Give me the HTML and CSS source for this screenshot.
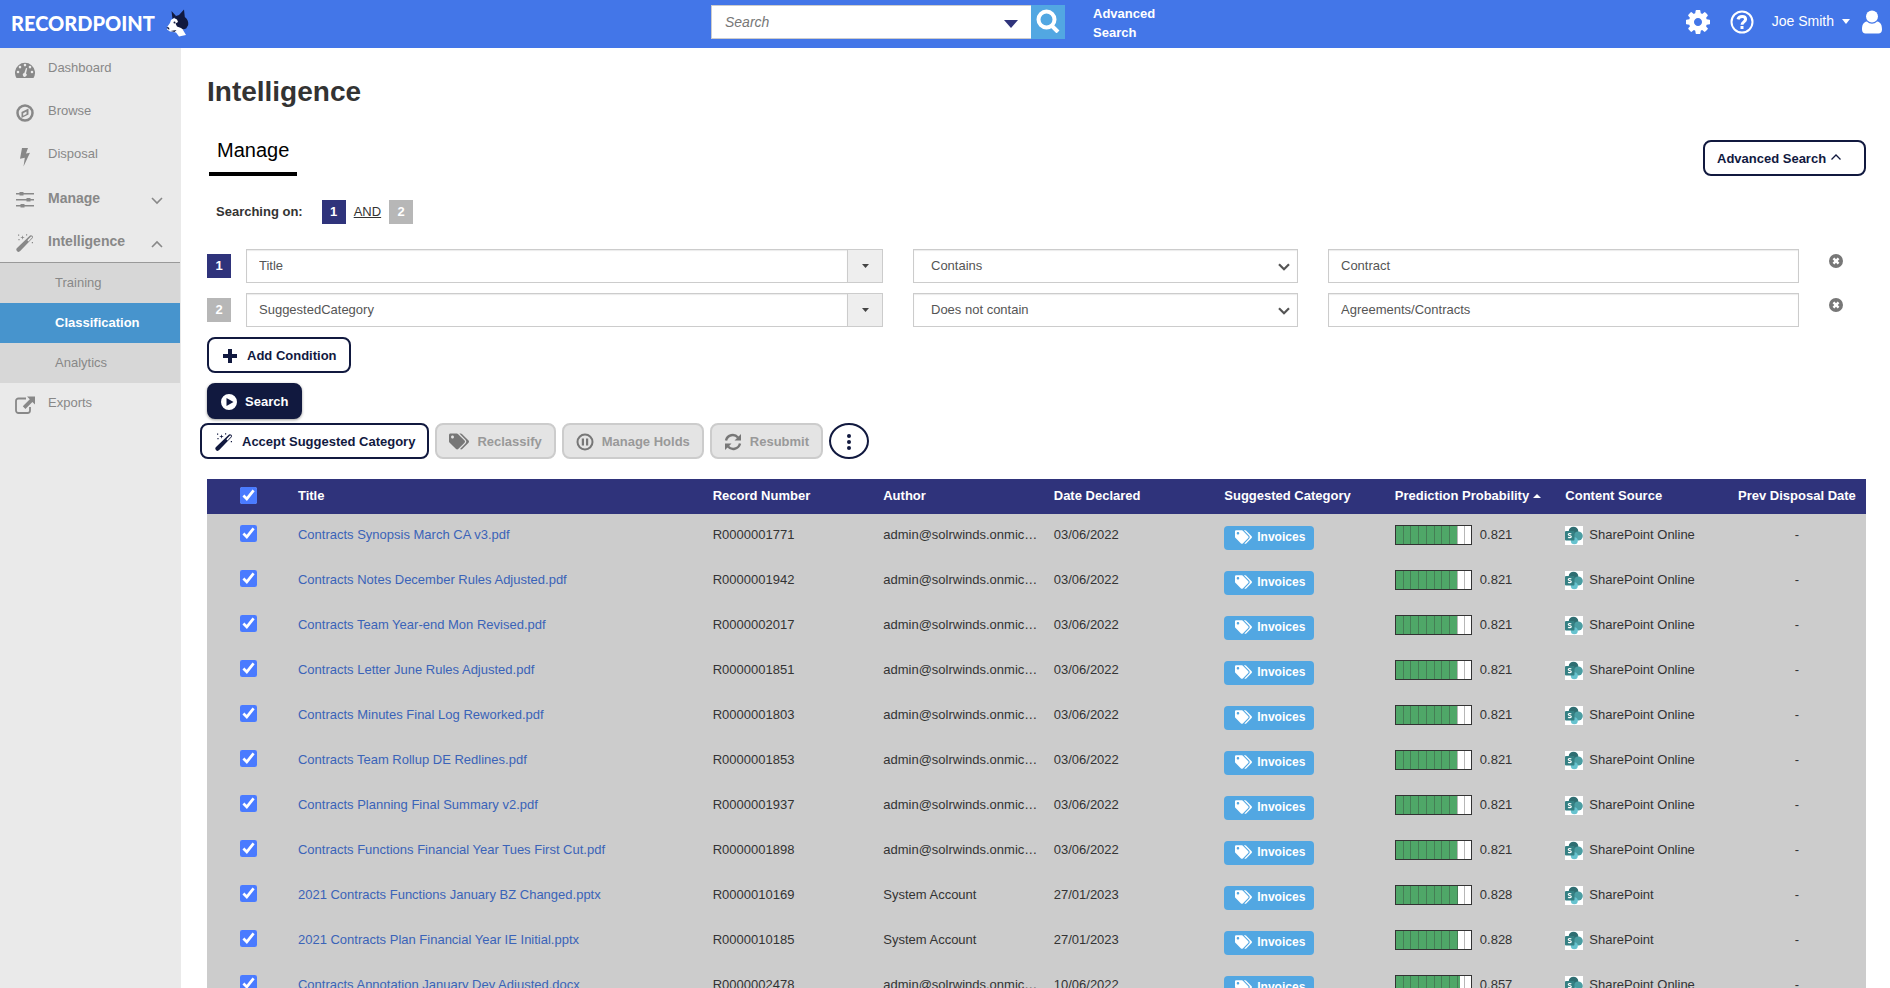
FILE: index.html
```html
<!DOCTYPE html>
<html lang="en">
<head>
    <meta charset="UTF-8">
    <meta name="viewport" content="width=device-width, initial-scale=1.0">
    <title>RecordPoint - Intelligence</title>
    <link rel="stylesheet" href="styles.css">
</head>
<body>
    <svg class="sprite" aria-hidden="true">
        <symbol id="i-tags" viewBox="0 0 640 512"><path d="M497.941 225.941L286.059 14.059A48 48 0 0 0 252.118 0H48C21.490 0 0 21.490 0 48v204.118a48 48 0 0 0 14.059 33.941l211.882 211.882c18.744 18.745 49.136 18.746 67.882 0l204.118-204.118c18.745-18.745 18.745-49.137 0-67.882zM112 160c-26.510 0-48-21.490-48-48s21.490-48 48-48 48 21.490 48 48-21.490 48-48 48zm513.941 133.823L421.823 497.941c-18.745 18.745-49.137 18.745-67.882 0l-.36-.36L527.640 323.522c16.999-16.999 26.362-39.600 26.362-63.640s-9.362-46.641-26.362-63.640L331.397 0h48.721a48 48 0 0 1 33.941 14.059l211.882 211.882c18.745 18.745 18.745 49.137 0 67.882z"/></symbol>
        <symbol id="i-wand" viewBox="0 0 18 18">
            <path fill-rule="evenodd" d="M14 1.400a2 2 0 0 1 2.700 2.700L4.200 17.100a2 2 0 0 1-3.200-3zM15 2.600l-3.600 3.700 1.100 1.100 3.600-3.800a.8.8 0 0 0-1.100-1z"/>
            <path d="M6.500 1.200l.5 1.800 1.800.5-1.800.5-.5 1.800L6 4l-1.800-.5L6 3zM2 .5h1.200v1.200H2zM10 .3h1.200v1.200H10zM15.800 8H17v1.200h-1.200zM2.400 5h1.200v1.200H2.400z"/>
        </symbol>
        <symbol id="i-sharepoint" viewBox="0 0 18 19">
            <path fill="#fff" d="M0 0h18v19H0z"/>
            <circle cx="8.500" cy="5.500" r="4.800" fill="#2f6e72"/>
            <circle cx="13.200" cy="10" r="4.600" fill="#4a9da2"/>
            <circle cx="9.300" cy="14.700" r="3.500" fill="#66c2ce"/>
            <rect y="5" width="9.500" height="9.500" rx="1" fill="#358083"/>
            <path fill="none" stroke="#fff" stroke-width="1.200" d="M6.300 7.900c-.8-.6-3-.6-3 .6s3 .8 3 2.100-2.200 1.300-3.200.6"/>
        </symbol>
        <symbol id="i-ticks" viewBox="0 0 75 18"><path shape-rendering="crispEdges" d="M7 0h1v18H7zM14 0h1v18h-1zM22 0h1v18h-1zM30 0h1v18h-1zM38 0h1v18h-1zM45 0h1v18h-1zM53 0h1v18h-1zM61 0h1v18h-1zM68 0h1v18h-1z"/></symbol>
        <symbol id="i-down" viewBox="0 0 12 8"><path fill="none" stroke="currentColor" stroke-width="2.200" d="M1 1.200l5 5 5-5"/></symbol>
        <symbol id="i-remove" viewBox="0 0 14 14"><path fill-rule="evenodd" d="M7 0a7 7 0 1 1 0 14A7 7 0 0 1 7 0zM5.300 3.600L3.600 5.300 5.300 7 3.600 8.700l1.700 1.700L7 8.700l1.700 1.700 1.700-1.700L8.700 7l1.700-1.700-1.700-1.700L7 5.300z"/></symbol>
    </svg>

    <header class="topbar">
        <a href="#" class="logo">RECORDPOINT
            <svg width="23" height="28" viewBox="0 0 23 28" aria-hidden="true">
                <path fill="#fff" d="M5 11l3-2 6 0 6 4-2 6-1 2 3 5-7 1.500-3-4-6-1-3-2 .5-3L4 14z"/>
                <path fill="#11193f" d="M5.500 2l4.500 5-3.500 3zM13 6l5-5.500.8 7.500c3 2 3.800 5 3.400 8l-2 3.500-3.200 1-2-1.500-4-1.500-1.500-3 2.500-1.500-1-2.500-3-1.500 2-2zM.5 18l2.500.5.5 2-1.500-.3zM4.500 22l6-1-2 2z"/>
                <circle cx="8.500" cy="13.500" r="1" fill="#11193f"/>
            </svg>
        </a>
        <form class="global-search">
            <input type="text" placeholder="Search" aria-label="Search">
            <svg class="search-caret" width="14" height="8" viewBox="0 0 14 8" aria-hidden="true"><path d="M0 0h14L7 8z"/></svg>
            <button type="button" aria-label="Search">
                <svg width="24" height="24" viewBox="0 0 24 24" aria-hidden="true"><path fill="none" stroke="#fff" stroke-width="4" d="M16 17l6 6"/><circle cx="10.500" cy="10.500" r="8" fill="none" stroke="#fff" stroke-width="4"/></svg>
            </button>
        </form>
        <div class="topbar-right">
            <a href="#" class="adv-link">Advanced<br>Search</a>
            <a href="#" class="icon-link" aria-label="Settings">
                <svg width="28" height="28" viewBox="0 0 1792 1792"><path d="M1152 896q0-106-75-181t-181-75-181 75-75 181 75 181 181 75 181-75 75-181zm512-109v222q0 12-8 23t-20 13l-185 28q-19 54-39 91 35 50 107 138 10 12 10 25t-9 23q-27 37-99 108t-94 71q-12 0-26-9l-138-108q-44 23-91 38-16 136-29 186-7 28-36 28h-222q-14 0-24.500-8.500t-11.500-21.500l-28-184q-49-16-90-37l-141 107q-10 9-25 9-14 0-25-11-126-114-165-168-7-10-7-23 0-12 8-23 15-21 51-66.500t54-70.500q-27-50-41-99l-183-27q-13-2-21-12.500t-8-23.500v-222q0-12 8-23t19-13l186-28q14-46 39-92-40-57-107-138-10-12-10-24 0-10 9-23 26-36 98.500-107.500t94.500-71.500q13 0 26 10l138 107q44-23 91-38 16-136 29-186 7-28 36-28h222q14 0 24.500 8.500t11.500 21.500l28 184q49 16 90 37l142-107q9-9 24-9 13 0 25 10 129 119 165 170 7 8 7 22 0 12-8 23-15 21-51 66.500t-54 70.500q26 50 41 98l183 28q13 2 21 12.500t8 23.500z"/></svg>
            </a>
            <a href="#" class="icon-link" aria-label="Help">
                <svg width="24" height="24" viewBox="0 0 24 24"><circle cx="12" cy="12" r="10.500" fill="none" stroke="#fff" stroke-width="2"/><path fill="none" stroke="#fff" stroke-width="3" d="M8 9.300c1-3.800 7.600-3.600 7.600 0 0 2.600-3.600 2.500-3.600 5.500"/><path d="M10.500 16h3v3h-3z"/></svg>
            </a>
            <a href="#" class="user-menu">Joe Smith
                <svg width="8" height="5" viewBox="0 0 8 5" aria-hidden="true"><path d="M0 0h8L4 5z"/></svg>
            </a>
            <svg class="avatar" width="20" height="24" viewBox="0 0 20 24" aria-hidden="true"><circle cx="10" cy="6.500" r="6"/><path d="M5 11.500c3 3 7 3 10 0 4 .5 5 4 5 8 0 2.500-1.500 4-3.500 4h-13C1.500 23.500 0 22 0 19.500c0-4 1-7.500 5-8z"/></svg>
        </div>
    </header>

    <div class="layout">
        <nav class="sidebar">
            <a href="#" class="nav-item">
                <svg width="20" height="18" viewBox="0 0 20 18"><path fill-rule="evenodd" d="M1.500 17A10 10 0 1 1 18.500 17zM10 2.800a1.300 1.300 0 1 0 0 2.600 1.300 1.300 0 0 0 0-2.600zM5 4.800a1.300 1.300 0 1 0 0 2.600 1.300 1.300 0 0 0 0-2.600zm10 0a1.300 1.300 0 1 0 0 2.600 1.300 1.300 0 0 0 0-2.600zM3 9.700a1.300 1.300 0 1 0 0 2.600 1.300 1.300 0 0 0 0-2.600zm14 0a1.300 1.300 0 1 0 0 2.600 1.300 1.300 0 0 0 0-2.600zM11 7l-1.700 5a1.900 1.900 0 1 0 1.700.4L12.200 7.300z"/></svg>
                Dashboard</a>
            <a href="#" class="nav-item">
                <svg width="20" height="18" viewBox="0 0 20 18"><circle cx="10" cy="9" r="7.500" fill="none" stroke="currentColor" stroke-width="2.500"/><path fill-rule="evenodd" d="M13.500 4.500v6l-7 3.500V8zM11.500 7.500L8.200 9.200v2.600l3.300-1.700z"/></svg>
                Browse</a>
            <a href="#" class="nav-item">
                <svg width="20" height="20" viewBox="0 0 20 20"><path d="M7 1h6l-2 5.500 4-.7L8.500 19.500l1.300-8.700-4.800.9z"/></svg>
                Disposal</a>
            <a href="#" class="nav-item group">
                <svg width="20" height="18" viewBox="0 0 20 18"><path d="M1 2h18v1.500H1zM1 8h18v1.500H1zM1 14h18v1.500H1zM4.500 1h4v3.500h-4zM11.500 7h4v3.500h-4zM5.500 13h4v3.500h-4z"/></svg>
                Manage
                <svg class="chevron" width="12" height="8" viewBox="0 0 12 8"><path fill="none" stroke="currentColor" stroke-width="1.600" d="M1 1l5 5 5-5"/></svg></a>
            <a href="#" class="nav-item group">
                <svg width="20" height="18"><use href="#i-wand"/></svg>
                Intelligence
                <svg class="chevron" width="12" height="8" viewBox="0 0 12 8"><path fill="none" stroke="currentColor" stroke-width="1.600" d="M1 7l5-5 5 5"/></svg></a>
            <div class="subnav">
                <a href="#">Training</a>
                <a href="#" class="active">Classification</a>
                <a href="#">Analytics</a>
            </div>
            <a href="#" class="nav-item">
                <svg width="20" height="18" viewBox="0 0 20 18"><path fill="none" stroke="currentColor" stroke-width="1.800" d="M11 2.500H3.500a2.500 2.500 0 0 0-2.500 2.500v9.500A2.500 2.500 0 0 0 3.500 17h9a2.500 2.500 0 0 0 2.500-2.500V11"/><path d="M12 .5h8v8l-2.600-2.600-7 7-2.600-2.600 7-7z"/></svg>
                Exports</a>
        </nav>

        <main class="content">
            <h1>Intelligence</h1>

            <div class="tabs">
                <a href="#" class="tab">Manage</a>
                <button type="button" class="btn btn-adv">Advanced Search
                    <svg width="10" height="6" viewBox="0 0 10 6" aria-hidden="true"><path fill="none" stroke="currentColor" stroke-width="1.300" d="M.5 5.500L5 1l4.500 4.500"/></svg>
                </button>
            </div>

            <div class="searching-on">
                <span class="label">Searching on:</span>
                <span class="num">1</span>
                <a href="#">AND</a>
                <span class="num muted">2</span>
            </div>

            <div class="condition">
                <span class="num">1</span>
                <div class="fields">
                    <div class="combo">
                        <input type="text" value="Title" aria-label="Field 1">
                        <button type="button" aria-label="Show fields"><svg width="7" height="4" viewBox="0 0 7 4"><path d="M0 0h7L3.500 4z"/></svg></button>
                    </div>
                    <div class="select">
                        <select aria-label="Operator 1"><option>Contains</option><option>Does not contain</option></select>
                        <svg width="12" height="8"><use href="#i-down"/></svg>
                    </div>
                    <input type="text" value="Contract" aria-label="Value 1">
                    <button type="button" class="remove" aria-label="Remove condition"><svg width="14" height="14"><use href="#i-remove"/></svg></button>
                </div>
            </div>
            <div class="condition">
                <span class="num muted">2</span>
                <div class="fields">
                    <div class="combo">
                        <input type="text" value="SuggestedCategory" aria-label="Field 2">
                        <button type="button" aria-label="Show fields"><svg width="7" height="4" viewBox="0 0 7 4"><path d="M0 0h7L3.500 4z"/></svg></button>
                    </div>
                    <div class="select">
                        <select aria-label="Operator 2"><option>Contains</option><option selected>Does not contain</option></select>
                        <svg width="12" height="8"><use href="#i-down"/></svg>
                    </div>
                    <input type="text" value="Agreements/Contracts" aria-label="Value 2">
                    <button type="button" class="remove" aria-label="Remove condition"><svg width="14" height="14"><use href="#i-remove"/></svg></button>
                </div>
            </div>

            <div class="search-buttons">
                <button type="button" class="btn">
                    <svg width="18" height="14" viewBox="0 0 18 14"><path d="M7 0h4v5h5v4h-5v5H7V9H2V5h5z"/></svg>
                    Add Condition</button>
                <button type="button" class="btn btn-primary">
                    <svg width="16" height="16" viewBox="0 0 16 16"><path fill-rule="evenodd" d="M8 0a8 8 0 1 1 0 16A8 8 0 0 1 8 0zM5.500 4v8l7-4z"/></svg>
                    Search</button>
            </div>

            <div class="actions">
                <button type="button" class="btn">
                    <svg width="20" height="18"><use href="#i-wand"/></svg>
                    Accept Suggested Category</button>
                <button type="button" class="btn" disabled>
                    <svg width="20" height="17"><use href="#i-tags"/></svg>
                    Reclassify</button>
                <button type="button" class="btn" disabled>
                    <svg width="18" height="18" viewBox="0 0 18 18"><circle cx="9" cy="9" r="7.500" fill="none" stroke="currentColor" stroke-width="2"/><path d="M5.800 5.500h2.200v7H5.800zM10 5.500h2.200v7H10z"/></svg>
                    Manage Holds</button>
                <button type="button" class="btn" disabled>
                    <svg width="18" height="18" viewBox="0 0 18 18"><path fill="none" stroke="currentColor" stroke-width="2.400" d="M2 7.500C3.500 1.500 10.500.5 14 4.500M16 10.500c-1.500 6-8.500 7-12 3"/><path d="M17 1v6.500h-6.500zM1 17v-6.500h6.500z"/></svg>
                    Resubmit</button>
                <button type="button" class="btn btn-more" aria-label="More actions">
                    <svg width="6" height="18" viewBox="0 0 6 18"><circle cx="3" cy="3" r="2"/><circle cx="3" cy="9" r="2"/><circle cx="3" cy="15" r="2"/></svg>
                </button>
            </div>

            <table class="records">
                <thead>
                    <tr>
                        <th class="check"><input type="checkbox" checked aria-label="Select all"></th>
                        <th class="title">Title</th>
                        <th>Record Number</th>
                        <th>Author</th>
                        <th>Date Declared</th>
                        <th>Suggested Category</th>
                        <th>Prediction Probability <svg width="8" height="4" viewBox="0 0 8 4"><path d="M0 4h8L4 0z"/></svg></th>
                        <th>Content Source</th>
                        <th class="disposal">Prev Disposal Date</th>
                    </tr>
                </thead>
                <tbody id="records"></tbody>
            </table>
        </main>
    </div>
    <script src="records.js"></script>
</body>
</html>
```
FILE: styles.css
```css
* {
    box-sizing: border-box;
}
body {
    margin: 0;
    height: 100vh;
    overflow: hidden;
    display: flex;
    flex-direction: column;
    font-family: "Liberation Sans", Arial, sans-serif;
    font-size: 13px;
    line-height: 20px;
    color: #333;
    background: #fff;
}
a {
    color: inherit;
    text-decoration: none;
}
svg {
    fill: currentColor;
    flex: none;
}
input, select, button {
    font: inherit;
}
button {
    cursor: pointer;
}
.sprite {
    display: none;
}

/* Top bar */
.topbar {
    flex: none;
    height: 48px;
    display: grid;
    grid-template-columns: 711fr 354px 825fr;
    background: #4376e8;
    color: #fff;
}
.logo {
    display: flex;
    align-items: center;
    gap: 11px;
    padding-left: 11px;
    padding-bottom: 2px;
    font-family: Lato, sans-serif;
    font-size: 20px;
    font-weight: 900;
}
.global-search {
    display: flex;
    height: 34px;
    margin-top: 5px;
    position: relative;
}
.global-search input {
    flex: 1;
    min-width: 0;
    padding: 0 13px;
    border: 1px solid #ccc;
    border-right: 0;
    font-size: 14px;
    font-style: italic;
}
.global-search input::placeholder {
    color: #777;
}
.search-caret {
    position: absolute;
    right: 47px;
    top: 15px;
    color: #2f337b;
}
.global-search button {
    width: 34px;
    padding: 4px;
    border: 0;
    background: #52a7e2;
}
.topbar-right {
    display: flex;
    align-items: flex-start;
    padding: 8px 8px 0 28px;
}
.adv-link {
    margin-top: -4px;
    margin-right: auto;
    font-weight: bold;
    line-height: 19px;
}
.icon-link {
    display: flex;
    align-items: center;
    height: 28px;
    margin-right: 18px;
}
.user-menu {
    display: flex;
    align-items: center;
    gap: 8px;
    height: 26px;
    margin-right: 12px;
    font-size: 14px;
}
.avatar {
    margin-top: 2px;
}

.layout {
    flex: 1;
    min-height: 0;
    display: flex;
}

/* Sidebar */
.sidebar {
    width: 181px;
    flex: none;
    padding-right: 1px;
    background: #eaeaea;
    color: #888;
}
.nav-item {
    display: flex;
    align-items: flex-start;
    gap: 13px;
    height: 43px;
    padding: 10px 17px 0 15px;
}
.nav-item svg {
    margin-top: 3px;
}
.nav-item.group {
    padding-top: 11px;
    font-size: 14px;
    font-weight: bold;
}
.nav-item .chevron {
    margin-top: 9px;
    margin-left: auto;
}
.subnav {
    margin-top: -1px;
    border-top: 1px solid #999;
    background: #d7d7d7;
}
.subnav a {
    display: block;
    padding: 10px 0 10px 55px;
}
.subnav .active {
    background: #4794cd;
    color: #fff;
    font-weight: bold;
}

/* Content */
.content {
    flex: 1;
    min-width: 0;
    padding: 27px 24px 0 26px;
    overflow: hidden;
}
h1 {
    margin: 0;
    font-size: 28px;
    line-height: 34px;
}
.tabs {
    display: flex;
    justify-content: space-between;
    align-items: flex-end;
    margin-top: 25px;
}
.tab {
    margin-left: 2px;
    padding: 0 8px 6px;
    border-bottom: 4px solid #000;
    color: #000;
    font-size: 20px;
    line-height: 32px;
}
.btn {
    display: inline-flex;
    align-items: center;
    gap: 8px;
    height: 36px;
    padding: 1px 12px 0;
    border: 2px solid #11193f;
    border-radius: 8px;
    background: #fff;
    color: #11193f;
    font-weight: bold;
}
.btn:disabled {
    border-color: #ccc;
    background: #e4e4e4;
    color: #999;
}
.btn:disabled svg {
    color: #777;
}
.btn-primary {
    background: #11193f;
    color: #fff;
    box-shadow: 0 1px 3px rgba(0, 0, 0, .4);
}
.btn-adv {
    gap: 5px;
    width: 163px;
    padding-top: 2px;
}
.btn-adv svg {
    margin-bottom: 4px;
}
.searching-on {
    display: flex;
    align-items: center;
    gap: 8px;
    margin: 24px 0 25px;
    padding-left: 9px;
    font-weight: bold;
}
.searching-on .label {
    margin-right: 11px;
}
.searching-on a {
    font-weight: normal;
    text-decoration: underline;
}
.num {
    flex: none;
    width: 24px;
    height: 24px;
    background: #2f337b;
    color: #fff;
    font-weight: bold;
    line-height: 24px;
    text-align: center;
}
.num.muted {
    background: #b7b7b7;
}
.condition {
    display: flex;
    align-items: center;
    gap: 15px;
    margin-bottom: 10px;
    color: #555;
}
.fields {
    flex: 1;
    display: grid;
    grid-template-columns: 637fr 385fr 471fr 37px;
    gap: 30px;
}
.fields input, .fields select {
    width: 100%;
    height: 34px;
    padding: 0 12px 1px;
    border: 1px solid #ccc;
    border-radius: 0;
    background: #fff;
    box-shadow: inset 0 1px 1px rgba(0, 0, 0, .08);
    color: #555;
}
.combo {
    display: flex;
}
.combo button {
    width: 35px;
    padding: 0;
    border: 1px solid #ccc;
    border-left: 0;
    background: #eee;
    color: #444;
    line-height: 0;
}
.combo input {
    flex: 1;
}
.select {
    position: relative;
}
.select select {
    appearance: none;
    padding-left: 17px;
}
.select svg {
    position: absolute;
    right: 8px;
    top: 14px;
}
.remove {
    display: flex;
    padding: 5px 0 0;
    border: 0;
    background: none;
    color: #777;
}
.search-buttons {
    display: flex;
    flex-direction: column;
    align-items: flex-start;
    gap: 10px;
}
.actions {
    display: flex;
    gap: 6px;
    margin: 4px 0 20px -7px;
}
.btn-more {
    width: 40px;
    justify-content: center;
    border-radius: 50%;
}

/* Records table */
.records {
    width: 100%;
    table-layout: fixed;
    border-collapse: collapse;
    background: #ccc;
}
.records th {
    height: 35px;
    width: 10.28%;
    padding: 0 8px 2px;
    background: #2f337b;
    color: #fff;
    text-align: left;
    white-space: nowrap;
}
.records td {
    height: 45px;
    padding: 11px 8px 0;
    vertical-align: top;
    white-space: nowrap;
}
.records th svg {
    vertical-align: 2px;
}
.records th.check {
    width: 5%;
}
.records th.title {
    width: 25%;
}
.records th.disposal {
    width: auto;
}
.check, .records .disposal {
    text-align: center;
}
.check input {
    display: block;
    width: 17px;
    height: 17px;
    margin: 0 auto;
    accent-color: #4a7bff;
}
.records a {
    color: #3a63b8;
}
.category {
    display: flex;
    align-items: center;
    gap: 5px;
    width: 90px;
    height: 24px;
    margin-top: 1px;
    padding: 0 11px 2px;
    border-radius: 4px;
    background: #52a7e2;
    color: #fff;
    font-size: 12px;
    font-weight: bold;
}
.probability, .source {
    display: flex;
    gap: 8px;
}
.source {
    gap: 6px;
}
.source svg {
    margin-top: 1px;
}
.meter {
    width: 77px;
    height: 20px;
    border: 1px solid #333;
    background: #fff;
    position: relative;
}
.meter-fill {
    height: 100%;
    background: #4fa768;
}
.meter svg {
    position: absolute;
    inset: 0;
    opacity: .35;
}
```
FILE: records.js
```js
const records = [
    ["Contracts Synopsis March CA v3.pdf", "R0000001771", "admin@solrwinds.onmic…", "03/06/2022", 0.821, "SharePoint Online"],
    ["Contracts Notes December Rules Adjusted.pdf", "R0000001942", "admin@solrwinds.onmic…", "03/06/2022", 0.821, "SharePoint Online"],
    ["Contracts Team Year-end Mon Revised.pdf", "R0000002017", "admin@solrwinds.onmic…", "03/06/2022", 0.821, "SharePoint Online"],
    ["Contracts Letter June Rules Adjusted.pdf", "R0000001851", "admin@solrwinds.onmic…", "03/06/2022", 0.821, "SharePoint Online"],
    ["Contracts Minutes Final Log Reworked.pdf", "R0000001803", "admin@solrwinds.onmic…", "03/06/2022", 0.821, "SharePoint Online"],
    ["Contracts Team Rollup DE Redlines.pdf", "R0000001853", "admin@solrwinds.onmic…", "03/06/2022", 0.821, "SharePoint Online"],
    ["Contracts Planning Final Summary v2.pdf", "R0000001937", "admin@solrwinds.onmic…", "03/06/2022", 0.821, "SharePoint Online"],
    ["Contracts Functions Financial Year Tues First Cut.pdf", "R0000001898", "admin@solrwinds.onmic…", "03/06/2022", 0.821, "SharePoint Online"],
    ["2021 Contracts Functions January BZ Changed.pptx", "R0000010169", "System Account", "27/01/2023", 0.828, "SharePoint"],
    ["2021 Contracts Plan Financial Year IE Initial.pptx", "R0000010185", "System Account", "27/01/2023", 0.828, "SharePoint"],
    ["Contracts Annotation January Dev Adjusted.docx", "R0000002478", "admin@solrwinds.onmic…", "10/06/2022", 0.857, "SharePoint Online"]
];

document.getElementById("records").innerHTML = records.map(([title, number, author, date, score, source]) => `
    <tr>
        <td class="check"><input type="checkbox" checked aria-label="Select ${title}"></td>
        <td><a href="#">${title}</a></td>
        <td>${number}</td>
        <td>${author}</td>
        <td>${date}</td>
        <td><span class="category"><svg width="17" height="14"><use href="#i-tags"/></svg>Invoices</span></td>
        <td><div class="probability"><div class="meter"><div class="meter-fill" style="width: ${score * 100}%"></div><svg width="75" height="18"><use href="#i-ticks"/></svg></div>${score}</div></td>
        <td><div class="source"><svg width="18" height="19"><use href="#i-sharepoint"/></svg>${source}</div></td>
        <td class="disposal">-</td>
    </tr>`).join("");
```
